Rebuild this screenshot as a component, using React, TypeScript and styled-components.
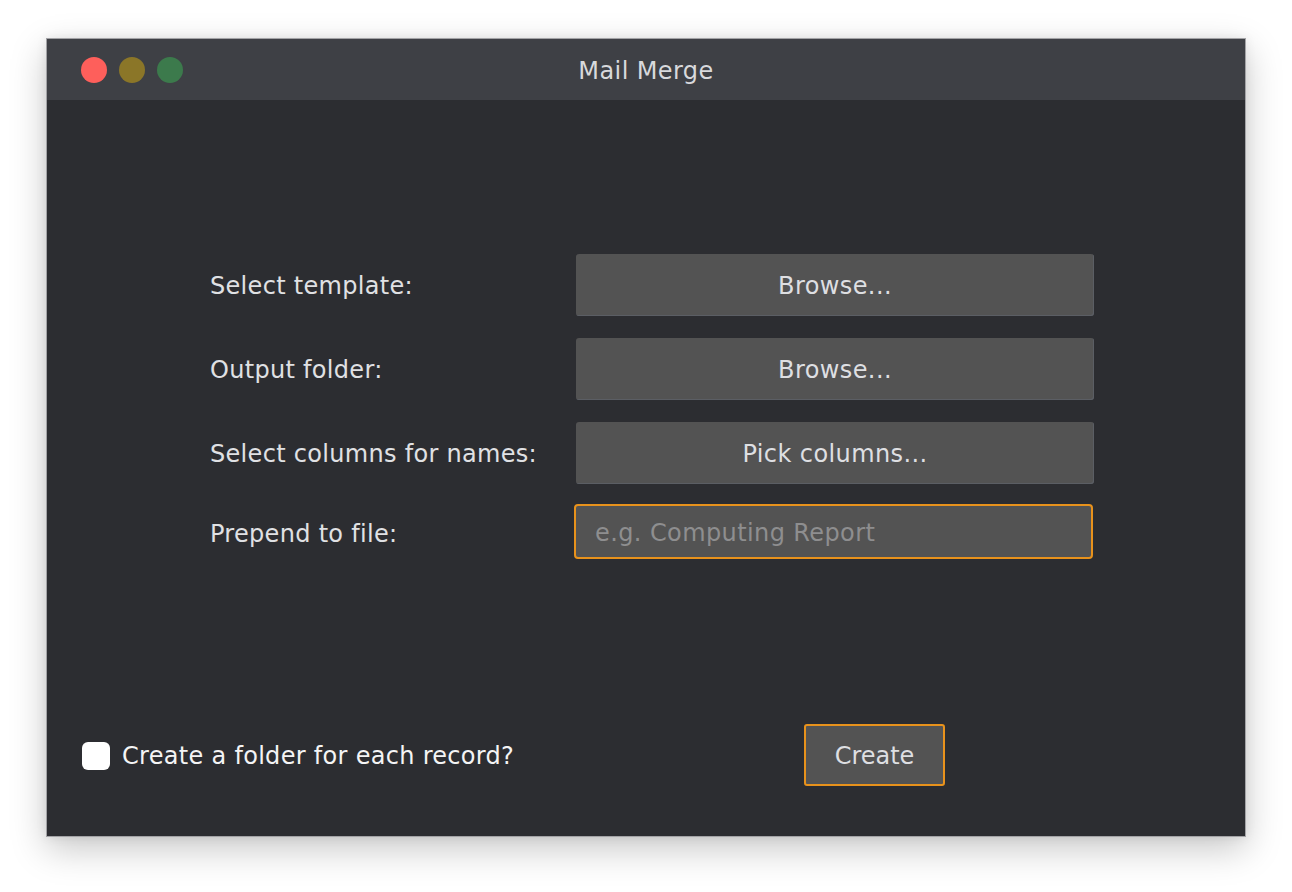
import React from "react";
import styled, { createGlobalStyle } from "styled-components";

const GlobalStyle = createGlobalStyle`
  html, body {
    margin: 0;
    padding: 0;
    background: #ffffff;
  }
  body {
    font-family: "DejaVu Sans", "Liberation Sans", sans-serif;
  }
`;

const Page = styled.div`
  width: 1292px;
  height: 892px;
  box-sizing: border-box;
  padding: 38px 0 0 46px;
  background: #ffffff;
`;

const Window = styled.div`
  width: 1200px;
  height: 799px;
  box-sizing: border-box;
  border: 1px solid #a3a3a6;
  display: flex;
  flex-direction: column;
  background: #2c2d31;
  box-shadow: 0 12px 34px rgba(0, 0, 0, 0.22), 0 0 10px rgba(0, 0, 0, 0.08);
`;

const TitleBar = styled.div`
  height: 61px;
  flex: none;
  background: #3e4045;
  display: grid;
  grid-template-columns: 1fr auto 1fr;
  align-items: center;
  padding: 0 34px;
`;

const Lights = styled.div`
  display: flex;
  gap: 12px;
`;

const Light = styled.span<{ $color: string }>`
  width: 26px;
  height: 26px;
  border-radius: 50%;
  background: ${(p) => p.$color};
`;

const Title = styled.div`
  color: #d8d9dc;
  font-size: 24px;
  letter-spacing: 0.4px;
  padding-top: 3px;
`;

const Content = styled.div`
  flex: 1;
  display: flex;
  flex-direction: column;
  padding: 154px 0 50px 0;
`;

const Form = styled.div`
  display: grid;
  grid-template-columns: 366px 518px;
  row-gap: 22px;
  margin-left: 163px;
  align-items: center;
`;

const Label = styled.div`
  color: #e0e1e4;
  font-size: 24px;
  letter-spacing: 0.3px;
  padding-top: 2px;
`;

const BrowseButton = styled.button`
  height: 62px;
  width: 518px;
  box-sizing: border-box;
  border: none;
  border-radius: 3px;
  background: #535353;
  box-shadow: inset -1px -1px 0 #5b5e64;
  color: #dedfe2;
  font-family: inherit;
  font-size: 24px;
  letter-spacing: 0.4px;
  padding: 2px 0 0 0;
`;

const TextField = styled.input`
  height: 55px;
  width: 519px;
  margin: -2px 0 0 -2px;
  box-sizing: border-box;
  border: 2px solid #e8921c;
  border-radius: 4px;
  background: #535353;
  color: #dedfe2;
  font-family: inherit;
  font-size: 24px;
  letter-spacing: 0.4px;
  padding: 2px 0 0 19px;
  outline: none;
  &::placeholder {
    color: #8e8e8f;
  }
`;

const Footer = styled.div`
  margin-top: auto;
  display: grid;
  grid-template-columns: 722px 141px;
  align-items: center;
  padding-left: 35px;
`;

const CheckRow = styled.label`
  display: flex;
  align-items: center;
  gap: 12px;
  color: #f4f4f5;
  font-size: 24px;
  letter-spacing: 0.3px;
  padding-top: 2px;
`;

const CheckBox = styled.span`
  width: 28px;
  height: 28px;
  border-radius: 6px;
  background: #ffffff;
  margin-top: -1px;
`;

const CreateButton = styled.button`
  height: 62px;
  width: 141px;
  box-sizing: border-box;
  border: 2px solid #e8921c;
  border-radius: 3px;
  background: #535353;
  color: #dedfe2;
  font-family: inherit;
  font-size: 24px;
  padding: 2px 0 0 0;
`;

export default function App() {
  return (
    <>
      <GlobalStyle />
      <Page>
        <Window>
          <TitleBar>
            <Lights>
              <Light $color="#fe5f5b" />
              <Light $color="#8b7628" />
              <Light $color="#3c7a4c" />
            </Lights>
            <Title>Mail Merge</Title>
            <span />
          </TitleBar>
          <Content>
            <Form>
              <Label>Select template:</Label>
              <BrowseButton>Browse...</BrowseButton>
              <Label>Output folder:</Label>
              <BrowseButton>Browse...</BrowseButton>
              <Label>Select columns for names:</Label>
              <BrowseButton>Pick columns...</BrowseButton>
              <Label>Prepend to file:</Label>
              <TextField placeholder="e.g. Computing Report" />
            </Form>
            <Footer>
              <CheckRow>
                <CheckBox />
                Create a folder for each record?
              </CheckRow>
              <CreateButton>Create</CreateButton>
            </Footer>
          </Content>
        </Window>
      </Page>
    </>
  );
}
